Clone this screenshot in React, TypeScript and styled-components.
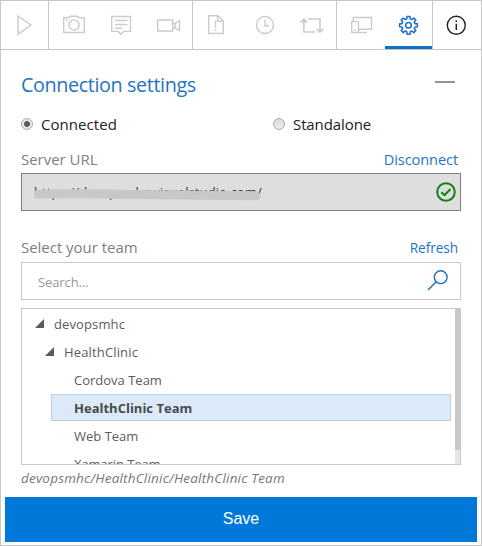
import React from "react";
import styled, { createGlobalStyle } from "styled-components";

const Global = createGlobalStyle`
  *, *::before, *::after { box-sizing: border-box; }
  body { margin: 0; background: #fff; }
`;

const Panel = styled.div`
  width: 482px;
  height: 546px;
  display: flex;
  flex-direction: column;
  border: 1px solid #c6c6c6;
  background: #fff;
  font-family: "Open Sans", "Noto Sans", sans-serif;
  overflow: hidden;
`;

const Toolbar = styled.nav`
  display: flex;
  height: 49px;
  flex: none;
  border-bottom: 1px solid #c6c6c6;
`;

const Group = styled.div`
  display: flex;
  border-right: 1px solid #c6c6c6;
  &:last-child { border-right: 0; }
`;

const Tool = styled.button<{ $w?: number; $active?: boolean; $color?: string }>`
  width: ${(p) => p.$w ?? 48}px;
  height: 48px;
  padding: 0;
  border: 0;
  background: none;
  color: ${(p) => p.$color ?? "#cbcbcb"};
  box-shadow: ${(p) => (p.$active ? "inset 0 -3px 0 #0f70c4" : "none")};
  svg { display: block; }
`;

const Content = styled.main`
  display: flex;
  flex-direction: column;
  padding: 0 20px;
  flex: 1;
`;

const Row = styled.div<{ $h: number; $top?: number; $bottom?: number }>`
  display: flex;
  align-items: center;
  justify-content: space-between;
  height: ${(p) => p.$h}px;
  margin-top: ${(p) => p.$top ?? 0}px;
  margin-bottom: ${(p) => p.$bottom ?? 0}px;
  flex: none;
`;

const Title = styled.h1`
  margin: 0;
  font-size: 19.8px;
  font-weight: 400;
  line-height: 28px;
  letter-spacing: -0.4px;
  color: #1f74c4;
`;

const Collapse = styled.button`
  width: 20px;
  height: 2px;
  margin: 0 6px 6px 0;
  padding: 0;
  border: 0;
  background: #949494;
`;

const Choices = styled.div`
  display: grid;
  grid-template-columns: 252px 1fr;
  height: 24px;
  margin-top: 13px;
  flex: none;
`;

const Choice = styled.label<{ $spacing: string }>`
  display: flex;
  align-items: center;
  gap: 8px;
  font-size: 15px;
  line-height: 24px;
  letter-spacing: ${(p) => p.$spacing};
  color: #222;
`;

const Radio = styled.span<{ $on?: boolean }>`
  width: 12px;
  height: 12px;
  margin-bottom: 1px;
  border: 1px solid #a9a9a9;
  border-radius: 50%;
  background: ${(p) =>
    p.$on
      ? "radial-gradient(circle, #5c5c5c 0 2.6px, #e9e9e9 3.4px)"
      : "linear-gradient(#dcdcdc, #ececec)"};
`;

const FieldLabel = styled.span`
  font-size: 15px;
  letter-spacing: -0.03px;
  color: #808080;
`;

const Link = styled.a<{ $size: number; $spacing: number }>`
  margin-right: 3px;
  font-size: ${(p) => p.$size}px;
  letter-spacing: ${(p) => p.$spacing}px;
  color: #1f74c8;
`;

const Field = styled.div<{ $filled?: boolean }>`
  position: relative;
  display: flex;
  align-items: center;
  justify-content: space-between;
  height: 38px;
  flex: none;
  padding: 0 ${(p) => (p.$filled ? "3px 0 12px" : "11px 2px 16px")};
  border: 1px solid ${(p) => (p.$filled ? "#808080" : "#c8c8c8")};
  background: ${(p) => (p.$filled ? "#dedede" : "#fff")};
  font-size: 13px;
  color: ${(p) => (p.$filled ? "#333" : "#999")};
`;

const Url = styled.span`
  letter-spacing: 0.1px;
`;

const Smear = styled.svg`
  position: absolute;
  left: 12px;
  top: 14px;
`;

const Placeholder = styled.span`
  padding-top: 3px;
  letter-spacing: -0.1px;
`;

const Tree = styled.div`
  display: flex;
  height: 157px;
  margin-top: 8px;
  flex: none;
  border: 1px solid #c8c8c8;
  border-right: 0;
  overflow: hidden;
`;

const Items = styled.ul`
  flex: 1;
  margin: 0;
  padding: 1px 4px 0 0;
  list-style: none;
`;

const Item = styled.li<{ $indent: number; $spacing?: number; $selected?: boolean }>`
  display: flex;
  align-items: center;
  height: ${(p) => (p.$selected ? 27 : 28)}px;
  margin-left: ${(p) => (p.$selected ? 29 : 0)}px;
  margin-bottom: ${(p) => (p.$selected ? 1 : 0)}px;
  padding-left: ${(p) => p.$indent}px;
  border: ${(p) => (p.$selected ? "1px solid #b5cfec" : "0")};
  background: ${(p) => (p.$selected ? "#dbe9f9" : "none")};
  font-size: 13px;
  font-weight: ${(p) => (p.$selected ? 700 : 400)};
  letter-spacing: ${(p) => p.$spacing ?? 0}px;
  color: ${(p) => (p.$selected ? "#4a4a4a" : "#5c5c5c")};
`;

const Arrow = styled.svg`
  margin: 0 10px 2px 0;
`;

const Track = styled.div`
  width: 6px;
  background: #e6e6e6;
  border-right: 1px solid #c8c8c8;
`;

const Thumb = styled.div`
  width: 6px;
  height: 141px;
  background: #c8c8c8;
`;

const Path = styled.div`
  height: 26px;
  line-height: 26px;
  font-size: 13.5px;
  font-style: italic;
  letter-spacing: 0.2px;
  color: #777;
`;

const Save = styled.button`
  height: 45px;
  margin: auto 4px 3px;
  flex: none;
  padding: 0 0 2px;
  border: 0;
  background: #0078d9;
  color: #fff;
  font: 16px "Liberation Sans", Arial, sans-serif;
`;

const Icon = ({ children, w = 48, sw = 1.4 }: { children: React.ReactNode; w?: number; sw?: number }) => (
  <svg width={w} height="48" viewBox={`0 0 ${w} 48`} fill="none" stroke="currentColor" strokeWidth={sw}>
    {children}
  </svg>
);

const Expanded = () => (
  <Arrow width="9" height="9" viewBox="0 0 9 9">
    <path d="M9 0V9H0Z" fill="#5a5a5a" />
  </Arrow>
);

const gear = (() => {
  const points: string[] = [];
  for (let i = 0; i < 8; i++) {
    const c = (i * Math.PI) / 4;
    [[-0.25, 6.7], [-0.17, 9], [0.17, 9], [0.25, 6.7]].forEach(([a, r]) =>
      points.push(`${(23.5 + r * Math.sin(c + a)).toFixed(2)} ${(24.3 - r * Math.cos(c + a)).toFixed(2)}`)
    );
  }
  return `M${points.join("L")}Z`;
})();

export default function App() {
  return (
    <>
      <Global />
      <Panel>
        <Toolbar>
          <Group>
            <Tool $w={47} aria-label="Play">
              <Icon w={47}><path d="M17 15v18.3L30 24Z" /></Icon>
            </Tool>
          </Group>
          <Group>
            <Tool $w={48} aria-label="Screenshot">
              <Icon>
                <path d="M14.7 16.7H19.5L21 15.2H28.5L30 16.7H35.3V31.5H14.7Z" />
                <circle cx="25" cy="24" r="5.1" />
                <path d="M17 19.2H18.6" />
              </Icon>
            </Tool>
            <Tool $w={48} aria-label="Note">
              <Icon>
                <path d="M14.7 15.5H33.4V30.4H26.8L24 33.2L21.2 30.4H14.7ZM18 19.5H30.5M18 23.5H30.5M18 27.2H25" />
              </Icon>
            </Tool>
            <Tool $w={47} aria-label="Record">
              <Icon w={47}>
                <path d="M12.7 19H27.7V30H12.7ZM27.7 22.5H30L34.5 19.7V29.6L30 26.9H27.7M30.3 22.5V26.9" />
              </Icon>
            </Tool>
          </Group>
          <Group>
            <Tool $w={48} aria-label="Create bug">
              <Icon>
                <path d="M15.7 14.7H25L30.3 20V32.5H15.7ZM24.5 14.7V20.3H30.3" />
                <path d="M22.5 19.5V26.5M22.5 28.3V30.1" />
              </Icon>
            </Tool>
            <Tool $w={48} aria-label="Timeline">
              <Icon><circle cx="24" cy="24" r="8.5" /><path d="M24 18.8V25H28" /></Icon>
            </Tool>
            <Tool $w={47} aria-label="Repeat">
              <Icon w={47}>
                <path d="M17.2 18.6V31H28.3M14 21.6L17.2 18.2L20.4 21.6M21 18H33.3V30.5M30.1 27.9L33.3 31.2L36.5 27.9" transform="translate(-2.3 0)" strokeWidth="1.6" />
              </Icon>
            </Tool>
          </Group>
          <Group>
            <Tool $w={48} aria-label="Devices">
              <Icon>
                <path d="M16.3 20V16.5H34.5V28.2H21.4M14.7 20.5H21.4V31.5H14.7ZM22 31.5H30M17.2 29H18.8" />
              </Icon>
            </Tool>
            <Tool $w={47} $active $color="#1a6fc4" aria-label="Settings">
              <Icon w={47} sw={1.5}><path d={gear} strokeLinejoin="round" /><circle cx="23.5" cy="24.3" r="2.8" /></Icon>
            </Tool>
          </Group>
          <Group>
            <Tool $w={47} $color="#222" aria-label="Information">
              <Icon w={47}><circle cx="23.3" cy="24.3" r="9" /><path d="M23.3 19.3V21M23.3 22.7V29" strokeWidth="1.5" /></Icon>
            </Tool>
          </Group>
        </Toolbar>
        <Content>
          <Row $h={28} $top={21}>
            <Title>Connection settings</Title>
            <Collapse aria-label="Collapse" />
          </Row>
          <Choices>
            <Choice $spacing="0.05px"><Radio $on />Connected</Choice>
            <Choice $spacing="-0.1px"><Radio />Standalone</Choice>
          </Choices>
          <Row $h={24} $top={11} $bottom={2}>
            <FieldLabel>Server URL</FieldLabel>
            <Link $size={14.6} $spacing={-0.1}>Disconnect</Link>
          </Row>
          <Field $filled>
            <Url>https://devopsmhc.visualstudio.com/</Url>
            <Smear width="228" height="14" viewBox="0 0 228 14">
              <path d="M4 6.2C40 5.2 74 6 108 6.6S174 7.6 222 7.8" fill="none" stroke="#c8c8c8" strokeWidth="9" strokeLinecap="round" />
            </Smear>
            <svg width="22" height="22" viewBox="0 0 22 22" fill="none" stroke="#128012" strokeWidth="2">
              <circle cx="11" cy="11" r="8.8" />
              <path d="M6.3 11.2L9.6 14.2L15.5 8" />
            </svg>
          </Field>
          <Row $h={24} $top={24} $bottom={3}>
            <FieldLabel>Select your team</FieldLabel>
            <Link $size={13.7} $spacing={-0.1}>Refresh</Link>
          </Row>
          <Field>
            <Placeholder>Search...</Placeholder>
            <svg width="22" height="22" viewBox="0 0 22 22" fill="none" stroke="#1a6fc4" strokeWidth="1.4">
              <circle cx="13.7" cy="8.2" r="6.4" />
              <path d="M9.2 12.8L1 21" />
            </svg>
          </Field>
          <Tree>
            <Items>
              <Item $indent={13} $spacing={0.12}><Expanded />devopsmhc</Item>
              <Item $indent={23} $spacing={0.15}><Expanded />HealthClinic</Item>
              <Item $indent={52}>Cordova Team</Item>
              <Item $indent={22} $selected>HealthClinic Team</Item>
              <Item $indent={52}>Web Team</Item>
              <Item $indent={52} $spacing={-0.1}>Xamarin Team</Item>
            </Items>
            <Track><Thumb /></Track>
          </Tree>
          <Path>devopsmhc/HealthClinic/HealthClinic Team</Path>
        </Content>
        <Save>Save</Save>
      </Panel>
    </>
  );
}
